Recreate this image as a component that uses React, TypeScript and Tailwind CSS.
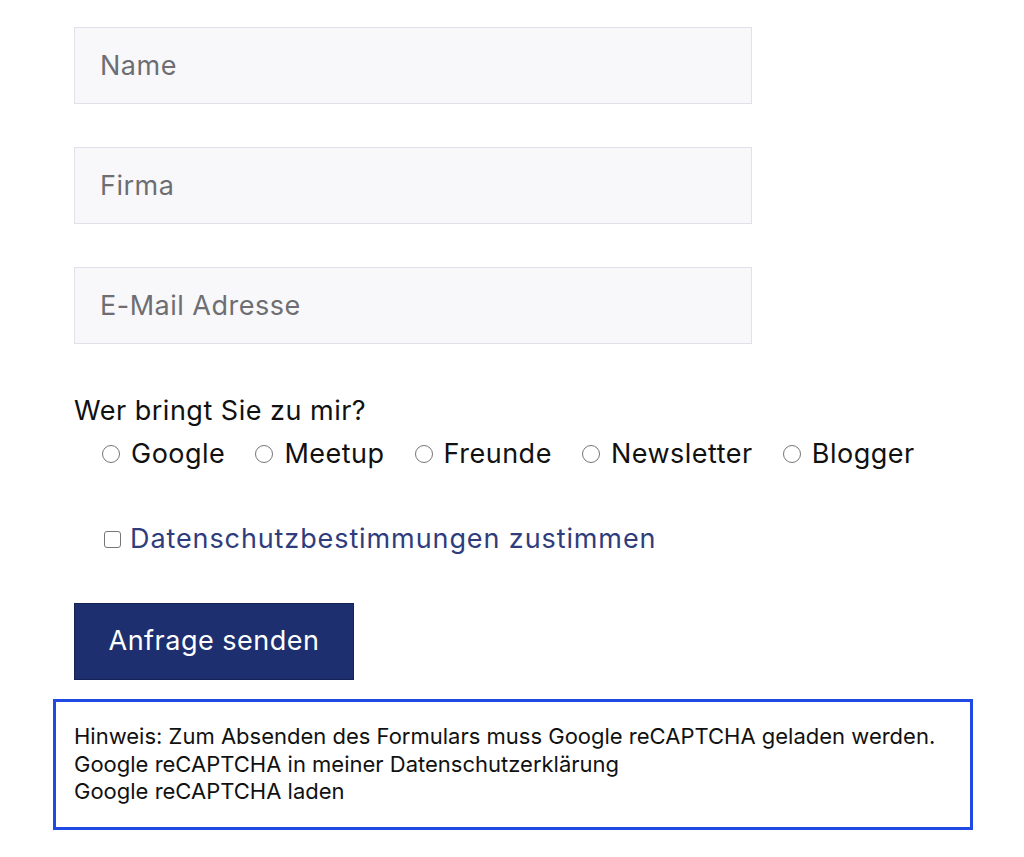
import React from 'react';

const sources = ['Google', 'Meetup', 'Freunde', 'Newsletter', 'Blogger'];

function Field({ placeholder }: { placeholder: string }) {
  return (
    <input
      type="text"
      placeholder={placeholder}
      className="block w-full h-[77px] bg-[#f8f8fb] border border-[#e1e1ea] px-[25px] text-[27px] tracking-[0.5px] text-[#222] placeholder:text-[#6e6e72] outline-none"
    />
  );
}

export default function App() {
  return (
    <div className="min-h-screen bg-white font-['Inter',sans-serif] text-[#111]">
      <form className="pt-[27px] pl-[53px] w-[973px]" onSubmit={(e) => e.preventDefault()}>
        <div className="pl-[21px] w-[699px] flex flex-col gap-[43px]">
          <Field placeholder="Name" />
          <Field placeholder="Firma" />
          <Field placeholder="E-Mail Adresse" />
        </div>

        {/* Woher kommt der Kontakt */}
        <div className="pl-[21px] mt-[49px] text-[27px] tracking-[0.5px]">
          <div className="leading-[36px]">Wer bringt Sie zu mir?</div>
          <div className="flex items-center pl-[28px] mt-[7px] gap-[30px] leading-[36px]">
            {sources.map((s) => (
              <label key={s} className="flex items-center gap-[11px]">
                <input
                  type="radio"
                  name="source"
                  className="appearance-none w-[18px] h-[18px] rounded-full border border-[#767676] bg-white"
                />
                {s}
              </label>
            ))}
          </div>
        </div>

        <div className="pl-[51px] mt-[49px]">
          <label className="flex items-center gap-[9px] text-[27px] tracking-[0.9px] leading-[36px] text-[#2f3d7c]">
            <input
              type="checkbox"
              className="appearance-none w-[17px] h-[17px] rounded-[3px] border border-[#767676] bg-white"
            />
            Datenschutzbestimmungen zustimmen
          </label>
        </div>

        <div className="pl-[21px] mt-[46px]">
          <button
            type="submit"
            className="h-[77px] w-[280px] bg-[#1d2f6f] border border-[#142255] text-white text-[27px] tracking-[0.5px]"
          >
            Anfrage senden
          </button>
        </div>

        {/* reCAPTCHA Hinweis */}
        <div className="mt-[19px] border-[3px] border-[#2149e4] px-[18px] pt-[21px] pb-[21px] text-[22px] leading-[27.5px] text-[#111]">
          <p>Hinweis: Zum Absenden des Formulars muss Google reCAPTCHA geladen werden.</p>
          <p>Google reCAPTCHA in meiner Datenschutzerklärung</p>
          <p>Google reCAPTCHA laden</p>
        </div>
      </form>
    </div>
  );
}
